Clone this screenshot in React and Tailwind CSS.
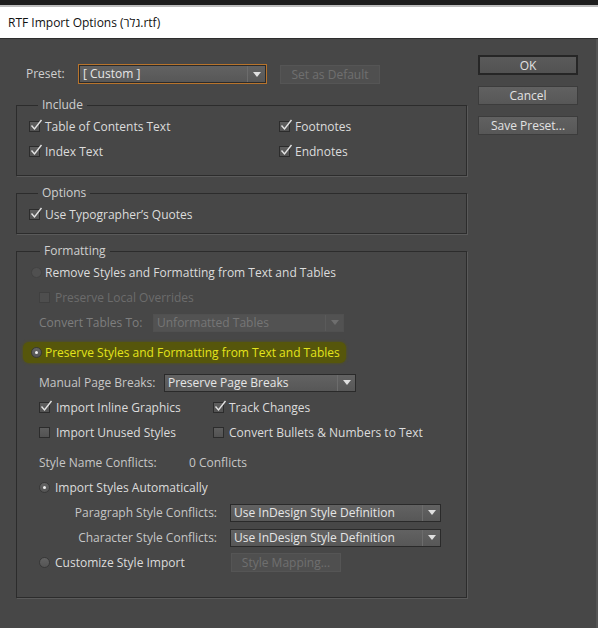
import React from "react";

const FONT = { fontFamily: '"Segoe UI", "Open Sans", "Noto Sans", sans-serif' };

const Check = ({ checked, disabled }) => (
  <span
    className={`relative inline-block w-[11px] h-[11px] border shrink-0 ${
      disabled ? "border-[#404040] bg-[#4e4e4e]" : "border-[#2c2c2c] bg-gradient-to-b from-[#5e5e5e] to-[#525252]"
    }`}
  >
    {checked && (
      <svg
        className="absolute left-[0px] top-[-3px]"
        width="13"
        height="13"
        viewBox="0 0 13 13"
      >
        <path d="M1.5 6.5 L4.5 10 L11.5 1" fill="none" stroke="#e4e4e4" strokeWidth="1.4" />
      </svg>
    )}
  </span>
);

const Radio = ({ selected, disabled }) => (
  <span
    className={`relative inline-flex items-center justify-center w-[11px] h-[11px] rounded-full border shrink-0 ${
      disabled ? "border-[#424242] bg-[#505050]" : "border-[#383838] bg-gradient-to-b from-[#636363] to-[#545454]"
    }`}
  >
    {selected && <span className="w-[3px] h-[3px] rounded-full bg-[#f0f0f0]" />}
  </span>
);

const Select = ({ value, width, disabled, height = "h-[18px]" }) => (
  <div
    className={`flex items-stretch border ${height} ${
      disabled ? "border-[#505050] bg-[#525252] text-[#767676]" : "border-[#2a2a2a] bg-gradient-to-b from-[#626262] to-[#575757] text-[#e6e6e6]"
    }`}
    style={{ width }}
  >
    <span className="flex-1 pl-[3px] leading-[16px] truncate">{value}</span>
    <span
      className={`w-[18px] flex items-center justify-center border-l ${
        disabled ? "border-[#5a5a5a]" : "border-[#6c6c6c]"
      }`}
    >
      <svg width="8" height="5" viewBox="0 0 8 5">
        <path d="M0 0 H8 L4 5 Z" fill={disabled ? "#6e6e6e" : "#e0e0e0"} />
      </svg>
    </span>
  </div>
);

const Row = ({ children, className = "" }) => (
  <div className={`h-[25px] flex items-center ${className}`}>{children}</div>
);

const Group = ({ title, children, className = "" }) => (
  <fieldset
    className={`border border-[#2c2c2c] shadow-[1px_1px_0_#5a5a5a] px-[12px] ${className}`}
  >
    <legend className="ml-[9px] px-[4px] text-[12px] leading-[16px] text-[#cfcfcf]">{title}</legend>
    {children}
  </fieldset>
);

const DlgButton = ({ children, primary, disabled, className = "" }) => (
  <button
    className={`h-[19px] text-[12px] leading-[15px] ${
      disabled
        ? "border border-[#555] bg-[#4f4f4f] text-[#6f6f6f]"
        : primary
        ? "border-2 border-[#262626] bg-gradient-to-b from-[#5a5a5a] to-[#525252] text-[#e2e2e2]"
        : "border border-[#3c3c3c] bg-gradient-to-b from-[#616161] to-[#575757] text-[#e2e2e2]"
    } ${className}`}
  >
    {children}
  </button>
);

export default function App() {
  return (
    <div className="w-[598px] h-[628px] flex flex-col bg-[#474747] overflow-hidden text-[12px]" style={FONT}>
      {/* window chrome */}
      <div className="h-[5px] bg-[#1d1d1d]" />
      <div className="h-[2px] bg-[#bdbdbd]" />
      <div className="h-[31px] bg-white flex items-center pl-[8px] pt-[1px] text-[12px] text-[#111]">
        RTF Import Options (גלר.rtf)
      </div>
      <div className="h-[1px] bg-[#2d2d2d]" />

      <div className="flex flex-1 pl-[16px] border-r-[2px] border-[#545454]">
        {/* left */}
        <div className="w-[451px] flex flex-col">
          <div className="flex items-center mt-[25px] h-[20px] pl-[10px]">
            <span className="w-[52px] text-[#cfcfcf]">Preset:</span>
            <div className="border border-[#b8742c] p-0">
              <Select value="[ Custom ]" width={187} height="h-[18px]" />
            </div>
            <DlgButton disabled className="ml-[13px] w-[100px]">Set as Default</DlgButton>
          </div>

          <Group title="Include" className="mt-[13px] pb-[11px]">
            <div className="grid grid-cols-[250px_1fr] mt-[1px]">
              <Row><Check checked /><span className="ml-[5px] text-[#dcdcdc]">Table of Contents Text</span></Row>
              <Row><Check checked /><span className="ml-[5px] text-[#dcdcdc]">Footnotes</span></Row>
              <Row><Check checked /><span className="ml-[5px] text-[#dcdcdc]">Index Text</span></Row>
              <Row><Check checked /><span className="ml-[5px] text-[#dcdcdc]">Endnotes</span></Row>
            </div>
          </Group>

          <Group title="Options" className="mt-[9px] pb-[6px]">
            <Row className="mt-[1px]"><Check checked /><span className="ml-[5px] text-[#dcdcdc]">Use Typographer’s Quotes</span></Row>
          </Group>

          <Group title="Formatting" className="mt-[9px] pb-[22px] px-[14px]">
            <Row className="mt-[1px]">
              <Radio disabled />
              <span className="ml-[3px] text-[#dcdcdc]">Remove Styles and Formatting from Text and Tables</span>
            </Row>
            <Row className="pl-[8px]">
              <Check disabled />
              <span className="ml-[5px] text-[#6c6c6c]">Preserve Local Overrides</span>
            </Row>
            <Row className="pl-[8px]">
              <span className="w-[114px] text-[#7e7e7e]">Convert Tables To:</span>
              <Select value="Unformatted Tables" width={191} disabled />
            </Row>
            <Row className="mt-[5px]">
              <div className="flex items-center ml-[-8px] pl-[8px] pr-[6px] h-[21px] bg-[#56560b] rounded-[6px] shadow-[0_0_3px_#56560b]">
                <Radio selected />
                <span className="ml-[3px] text-[#e4e41c]">Preserve Styles and Formatting from Text and Tables</span>
              </div>
            </Row>
            <Row className="mt-[5px] pl-[8px]">
              <span className="w-[125px] text-[#c6c6c6]">Manual Page Breaks:</span>
              <Select value="Preserve Page Breaks" width={192} />
            </Row>
            <div className="grid grid-cols-[174px_1fr] pl-[8px]">
              <Row><Check checked /><span className="ml-[6px] text-[#dcdcdc]">Import Inline Graphics</span></Row>
              <Row><Check checked /><span className="ml-[5px] text-[#dcdcdc]">Track Changes</span></Row>
              <Row><Check /><span className="ml-[6px] text-[#dcdcdc]">Import Unused Styles</span></Row>
              <Row><Check /><span className="ml-[5px] text-[#dcdcdc]">Convert Bullets &amp; Numbers to Text</span></Row>
            </div>
            <Row className="mt-[5px] pl-[8px]">
              <span className="w-[150px] text-[#c6c6c6]">Style Name Conflicts:</span>
              <span className="text-[#c6c6c6]">0 Conflicts</span>
            </Row>
            <Row className="pl-[8px]">
              <Radio selected />
              <span className="ml-[5px] text-[#dcdcdc]">Import Styles Automatically</span>
            </Row>
            <Row>
              <span className="w-[186px] text-right text-[#c6c6c6]">Paragraph Style Conflicts:</span>
              <span className="ml-[13px]"><Select value="Use InDesign Style Definition" width={211} /></span>
            </Row>
            <Row>
              <span className="w-[186px] text-right text-[#c6c6c6]">Character Style Conflicts:</span>
              <span className="ml-[13px]"><Select value="Use InDesign Style Definition" width={211} /></span>
            </Row>
            <Row className="pl-[8px]">
              <Radio />
              <span className="w-[176px] ml-[5px] text-[#dcdcdc]">Customize Style Import</span>
              <DlgButton disabled className="w-[110px] h-[18px]">Style Mapping...</DlgButton>
            </Row>
          </Group>
        </div>

        {/* right buttons */}
        <div className="flex flex-col ml-[11px] mt-[16px] w-[100px] gap-[11px]">
          <DlgButton primary className="h-[20px]">OK</DlgButton>
          <DlgButton>Cancel</DlgButton>
          <DlgButton>Save Preset...</DlgButton>
        </div>
      </div>
    </div>
  );
}
